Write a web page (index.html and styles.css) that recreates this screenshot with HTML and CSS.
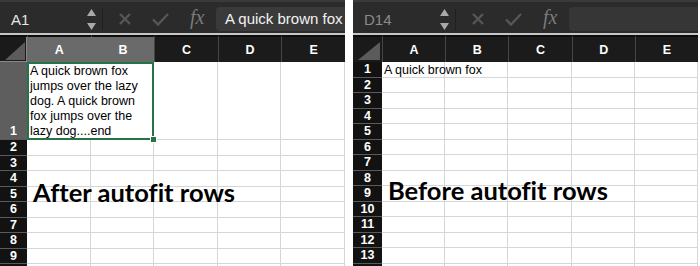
FILE: index.html
```html
<!DOCTYPE html>
<html lang="en">
  <head>
    <meta charset="UTF-8" />
    <meta name="viewport" content="width=device-width, initial-scale=1.0" />
    <title>Autofit rows</title>
    <link rel="stylesheet" href="styles.css">
  </head>
  <body>
    <div class="page">
      <!-- after autofit -->
      <div class="sheet">
        <div class="toolbar">
          <div class="namebox">
            <span class="ref">A1</span>
            <svg class="spin" width="9" height="21" viewBox="0 0 9 21"><path d="M0 7 L4.5 0 L9 7 Z M0 14 L4.5 21 L9 14 Z" fill="#a9a9a9"/></svg>
          </div>
          <div class="actions">
            <svg width="12" height="12" viewBox="0 0 12 12"><path d="M1 1 L11 11 M11 1 L1 11" stroke="#565656" stroke-width="2.4"/></svg>
            <svg width="17" height="13" viewBox="0 0 17 13"><path d="M1 6.5 L6 11.5 L16 1" fill="none" stroke="#565656" stroke-width="2.4"/></svg>
            <span class="fx">fx</span>
          </div>
          <div class="formula">A quick brown fox</div>
        </div>
        <div class="grid grid-after">
          <div class="corner corner-sel"><svg width="27" height="25" viewBox="0 0 27 25"><path d="M5 23 L25 23 L25 5 Z" fill="#5b5b5b"/></svg></div>
          <div class="ch ch-sel">A</div><div class="ch ch-sel">B</div><div class="ch">C</div><div class="ch">D</div><div class="ch">E</div>

          <div class="rh rh-sel">1</div>
          <div class="c span2 sel">A quick brown fox<br>jumps over the lazy<br>dog. A quick brown<br>fox jumps over the<br>lazy dog....end</div>
          <div class="c"></div><div class="c"></div><div class="c"></div>

          <div class="rh">2</div><div class="c"></div><div class="c"></div><div class="c"></div><div class="c"></div><div class="c"></div>
          <div class="rh">3</div><div class="c"></div><div class="c"></div><div class="c"></div><div class="c"></div><div class="c"></div>
          <div class="rh">4</div><div class="c"></div><div class="c"></div><div class="c"></div><div class="c"></div><div class="c"></div>
          <div class="rh">5</div><div class="c"></div><div class="c"></div><div class="c"></div><div class="c"></div><div class="c"></div>
          <div class="rh">6</div><div class="c"></div><div class="c"></div><div class="c"></div><div class="c"></div><div class="c"></div>
          <div class="rh">7</div><div class="c"></div><div class="c"></div><div class="c"></div><div class="c"></div><div class="c"></div>
          <div class="rh">8</div><div class="c"></div><div class="c"></div><div class="c"></div><div class="c"></div><div class="c"></div>
          <div class="rh">9</div><div class="c"></div><div class="c"></div><div class="c"></div><div class="c"></div><div class="c"></div>
          <div class="rh"></div><div class="c"></div><div class="c"></div><div class="c"></div><div class="c"></div><div class="c"></div>
        </div>
        <div class="note note-after">After autofit rows</div>
      </div>

      <!-- before autofit -->
      <div class="sheet">
        <div class="toolbar">
          <div class="namebox">
            <span class="ref ref-dim">D14</span>
            <svg class="spin" width="9" height="21" viewBox="0 0 9 21"><path d="M0 7 L4.5 0 L9 7 Z M0 14 L4.5 21 L9 14 Z" fill="#a9a9a9"/></svg>
          </div>
          <div class="actions">
            <svg width="12" height="12" viewBox="0 0 12 12"><path d="M1 1 L11 11 M11 1 L1 11" stroke="#565656" stroke-width="2.4"/></svg>
            <svg width="17" height="13" viewBox="0 0 17 13"><path d="M1 6.5 L6 11.5 L16 1" fill="none" stroke="#565656" stroke-width="2.4"/></svg>
            <span class="fx">fx</span>
          </div>
          <div class="formula formula-empty"></div>
        </div>
        <div class="grid grid-before">
          <div class="corner"><svg width="29" height="25" viewBox="0 0 29 25"><path d="M5 23 L27 23 L27 5 Z" fill="#5b5b5b"/></svg></div>
          <div class="ch">A</div><div class="ch">B</div><div class="ch">C</div><div class="ch">D</div><div class="ch">E</div>

          <div class="rh">1</div><div class="c text">A quick brown fox</div><div class="c"></div><div class="c"></div><div class="c"></div><div class="c"></div>
          <div class="rh">2</div><div class="c"></div><div class="c"></div><div class="c"></div><div class="c"></div><div class="c"></div>
          <div class="rh">3</div><div class="c"></div><div class="c"></div><div class="c"></div><div class="c"></div><div class="c"></div>
          <div class="rh">4</div><div class="c"></div><div class="c"></div><div class="c"></div><div class="c"></div><div class="c"></div>
          <div class="rh">5</div><div class="c"></div><div class="c"></div><div class="c"></div><div class="c"></div><div class="c"></div>
          <div class="rh">6</div><div class="c"></div><div class="c"></div><div class="c"></div><div class="c"></div><div class="c"></div>
          <div class="rh">7</div><div class="c"></div><div class="c"></div><div class="c"></div><div class="c"></div><div class="c"></div>
          <div class="rh">8</div><div class="c"></div><div class="c"></div><div class="c"></div><div class="c"></div><div class="c"></div>
          <div class="rh">9</div><div class="c"></div><div class="c"></div><div class="c"></div><div class="c"></div><div class="c"></div>
          <div class="rh">10</div><div class="c"></div><div class="c"></div><div class="c"></div><div class="c"></div><div class="c"></div>
          <div class="rh">11</div><div class="c"></div><div class="c"></div><div class="c"></div><div class="c"></div><div class="c"></div>
          <div class="rh">12</div><div class="c"></div><div class="c"></div><div class="c"></div><div class="c"></div><div class="c"></div>
          <div class="rh">13</div><div class="c"></div><div class="c"></div><div class="c"></div><div class="c"></div><div class="c"></div>
          <div class="rh"></div><div class="c"></div><div class="c"></div><div class="c"></div><div class="c"></div><div class="c"></div>
        </div>
        <div class="note note-before">Before autofit rows</div>
      </div>
    </div>
  </body>
</html>
```

FILE: styles.css
```css
body {
  margin: 0;
  background: #ffffff;
  font-family: "Liberation Sans", Arial, sans-serif;
}

.page {
  display: flex;
  gap: 8px;
}

.sheet {
  position: relative;
  width: 345px;
  height: 266px;
  overflow: hidden;
  background: #ffffff;
}

/* formula bar */
.toolbar {
  box-sizing: border-box;
  height: 35px;
  display: flex;
  align-items: center;
  padding-top: 3px;
  background: #2b2b2b;
  border-top: 2px solid #3a3a3a;
  border-bottom: 2px solid #c6c6c6;
}

.namebox {
  width: 103px;
  box-sizing: border-box;
  display: flex;
  align-items: center;
  justify-content: space-between;
  padding: 0 6px 0 11px;
  border-right: 1px solid #1f1f1f;
}

.ref {
  color: #e4e4e4;
  font-size: 15px;
}

.ref-dim {
  color: #8a8a8a;
}

.actions {
  width: 113px;
  box-sizing: border-box;
  display: flex;
  align-items: center;
  gap: 21px;
  padding-left: 16px;
}

.fx {
  font-family: "Liberation Serif", "Times New Roman", serif;
  font-style: italic;
  font-size: 20px;
  color: #7a7a7a;
  margin-top: -3px;
}

.formula {
  flex: 1;
  height: 24px;
  line-height: 24px;
  padding-left: 9px;
  background: #3a3a3a;
  border-radius: 4px 0 0 4px;
  color: #f2f2f2;
  font-size: 15px;
  white-space: nowrap;
  overflow: hidden;
}

.formula-empty {
  background: #363636;
}

/* grid */
.grid {
  display: grid;
  grid-template-columns: 27px repeat(5, minmax(0, 1fr));
  grid-template-rows: 27px;
  grid-auto-rows: 15.5px;
  font-size: 12.5px;
}

.grid-after {
  grid-template-rows: 27px 78px;
}

.grid-before {
  grid-template-columns: 29px repeat(5, minmax(0, 1fr));
}

.corner {
  background: #1a1a1a;
  border-top: 2px solid #0c0c0c;
  line-height: 0;
}

.corner-sel {
  box-shadow: inset -1px -1px 0 #8a8a8a;
}

.ch {
  display: flex;
  align-items: center;
  justify-content: center;
  background: #1b1b1b;
  border-top: 2px solid #0c0c0c;
  border-left: 1px solid #454545;
  color: #ffffff;
  font-weight: bold;
}

.ch-sel {
  background: #6a6a6a;
  border-left-color: #6a6a6a;
}

.rh {
  display: flex;
  align-items: center;
  justify-content: center;
  background: #121212;
  border-bottom: 1px solid #5a5a5a;
  color: #ffffff;
  font-weight: bold;
}

.rh-sel {
  align-items: flex-end;
  background: #5e5e5e;
  padding-bottom: 1px;
}

.c {
  border-right: 1px solid #d6d6d6;
  border-bottom: 1px solid #d6d6d6;
  color: #000000;
}

.text {
  padding: 1px 0 0 2px;
  white-space: nowrap;
  line-height: 14px;
}

.span2 {
  grid-column: span 2;
}

.sel {
  position: relative;
  border: 2px solid #247447;
  padding: 0 0 0 1px;
  line-height: 15px;
  white-space: nowrap;
}

.sel::after {
  content: "";
  position: absolute;
  right: -5px;
  bottom: -5px;
  width: 5px;
  height: 5px;
  background: #247447;
  border: 1px solid #ffffff;
}

/* captions drawn over the sheet */
.note {
  position: absolute;
  font-family: Lato, "Open Sans", sans-serif;
  font-weight: 700;
  font-size: 25.5px;
  line-height: 26px;
  font-variant-ligatures: none;
  color: #000000;
  white-space: nowrap;
}

.note-after {
  left: 33px;
  top: 179px;
}

.note-before {
  left: 35px;
  top: 177px;
}
```
